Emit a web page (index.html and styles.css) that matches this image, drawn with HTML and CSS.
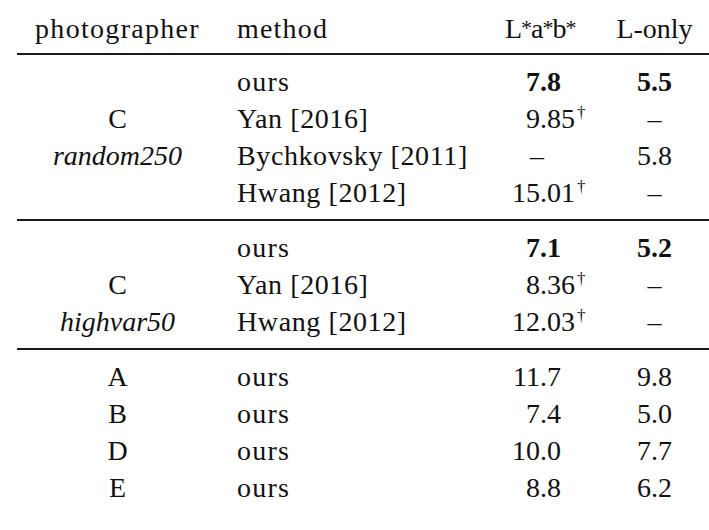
FILE: index.html
```html
<!DOCTYPE html>
<html lang="en">
<head>
    <meta charset="UTF-8">
    <title>Results by photographer</title>
    <link rel="stylesheet" href="styles.css">
</head>
<body>

    <table class="results">
        <colgroup>
            <col class="col-photographer">
            <col class="col-method">
            <col class="col-lab">
            <col class="col-l">
        </colgroup>
        <thead>
            <tr>
                <th class="who word">photographer</th>
                <th class="method word">method</th>
                <th class="lab">L<span class="star">*</span>a<span class="star">*</span>b<span class="star">*</span></th>
                <th class="l">L-only</th>
            </tr>
        </thead>

        <!-- Fotograf C, random250 -->
        <tbody>
            <tr>
                <td class="who"></td>
                <td class="method word">ours</td>
                <td class="lab best"><span class="int">7</span>.8</td>
                <td class="l best">5.5</td>
            </tr>
            <tr>
                <td class="who">C</td>
                <td class="method">Yan [2016]</td>
                <td class="lab"><span class="int">9</span>.85<sup>†</sup></td>
                <td class="l">–</td>
            </tr>
            <tr>
                <td class="who"><em>random250</em></td>
                <td class="method">Bychkovsky [2011]</td>
                <td class="lab"><span class="dash">–</span></td>
                <td class="l">5.8</td>
            </tr>
            <tr>
                <td class="who"></td>
                <td class="method">Hwang [2012]</td>
                <td class="lab"><span class="int">15</span>.01<sup>†</sup></td>
                <td class="l">–</td>
            </tr>
        </tbody>

        <!-- Fotograf C, highvar50 -->
        <tbody>
            <tr>
                <td class="who"></td>
                <td class="method word">ours</td>
                <td class="lab best"><span class="int">7</span>.1</td>
                <td class="l best">5.2</td>
            </tr>
            <tr>
                <td class="who">C</td>
                <td class="method">Yan [2016]</td>
                <td class="lab"><span class="int">8</span>.36<sup>†</sup></td>
                <td class="l">–</td>
            </tr>
            <tr>
                <td class="who"><em>highvar50</em></td>
                <td class="method">Hwang [2012]</td>
                <td class="lab"><span class="int">12</span>.03<sup>†</sup></td>
                <td class="l">–</td>
            </tr>
        </tbody>

        <!-- restliche Fotografen -->
        <tbody>
            <tr>
                <td class="who">A</td>
                <td class="method word">ours</td>
                <td class="lab"><span class="int">11</span>.7</td>
                <td class="l">9.8</td>
            </tr>
            <tr>
                <td class="who">B</td>
                <td class="method word">ours</td>
                <td class="lab"><span class="int">7</span>.4</td>
                <td class="l">5.0</td>
            </tr>
            <tr>
                <td class="who">D</td>
                <td class="method word">ours</td>
                <td class="lab"><span class="int">10</span>.0</td>
                <td class="l">7.7</td>
            </tr>
            <tr>
                <td class="who">E</td>
                <td class="method word">ours</td>
                <td class="lab"><span class="int">8</span>.8</td>
                <td class="l">6.2</td>
            </tr>
        </tbody>
    </table>

</body>
</html>
```

FILE: styles.css
```css
body {
    margin: 0;
    background: #fff;
    color: #111;
    font-family: "Liberation Serif", "Times New Roman", serif;
    font-size: 28px;
}

.results {
    margin-left: 17px;
    width: 692px;
    table-layout: fixed;
    border-collapse: collapse;
}

.col-photographer { width: 201px; }
.col-method { width: 272px; }
.col-lab { width: 110px; }
.col-l { width: 109px; }

th,
td {
    padding: 0;
    height: 37px;
    line-height: 37px;
    font-weight: normal;
    white-space: nowrap;
}

/* Kopfzeile */
thead th {
    padding-top: 10px;
    padding-bottom: 6px;
    border-bottom: 2px solid #1a1a1a;
}

tbody {
    border-bottom: 2px solid #1a1a1a;
}

tbody:last-child {
    border-bottom: none;
}

tbody tr:first-child td {
    padding-top: 8px;
}

tbody tr:last-child td {
    padding-bottom: 8px;
}

.who {
    text-align: center;
}

.method {
    text-align: left;
    padding-left: 19px;
    letter-spacing: 0.6px;
}

/* reine Wörter laufen in der Vorlage etwas breiter */
.word {
    letter-spacing: 1.2px;
}

th.who.word {
    letter-spacing: 1.3px;
}

th.lab {
    text-align: left;
    padding-left: 15px;
    letter-spacing: -1px;
}

.star {
    font-size: 22px;
    line-height: 0;
    vertical-align: 3px;
}

td.lab {
    text-align: left;
}

/* Dezimalpunkt-Ausrichtung */
.int {
    display: inline-block;
    width: 50px;
    text-align: right;
}

.dash {
    padding-left: 40px;
}

.l {
    text-align: center;
}

.best {
    font-weight: bold;
}

sup {
    font-size: 17px;
    line-height: 0;
    vertical-align: 10px;
    margin-left: 2px;
}
```
